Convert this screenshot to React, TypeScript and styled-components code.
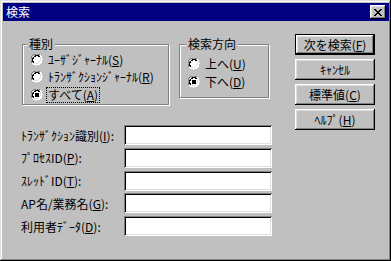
import React from "react";
import styled, { createGlobalStyle } from "styled-components";

const Global = createGlobalStyle`
  html, body { margin: 0; padding: 0; background: #c0c0c0; }
  body { font-family: "Noto Sans CJK JP", "Noto Sans", sans-serif; font-size: 12px; }
  * { box-sizing: border-box; }
`;

const Window = styled.div`
  width: 391px;
  height: 261px;
  background: #c0c0c0;
  padding: 3px 2px 3px 3px;
  box-shadow: inset -1px -1px #000, inset 1px 1px #dfdfdf, inset -2px -2px #808080, inset 2px 2px #fff;
  display: flex;
  flex-direction: column;
  color: #000;
  font-family: "Noto Sans CJK JP", "Noto Sans", sans-serif;
  font-size: 12px;
  line-height: 13px;
`;

const TitleBar = styled.div`
  height: 18px;
  background: #000080;
  display: flex;
  align-items: center;
  justify-content: space-between;
  padding: 0 3px 0 3px;
`;

const TitleText = styled.span`
  color: #fff;
  font-size: 12px;
  line-height: 14px;
`;

const CloseButton = styled.div`
  width: 16px;
  height: 14px;
  background: #c0c0c0;
  box-shadow: inset -1px -1px #000, inset 1px 1px #fff, inset -2px -2px #808080, inset 2px 2px #dfdfdf;
  display: flex;
  align-items: center;
  justify-content: center;
`;

const Body = styled.div`
  flex: 1;
  display: flex;
  padding: 13px 0 0 19px;
`;

const LeftCol = styled.div`
  width: 273px;
  margin-top: 10px;
  display: flex;
  flex-direction: column;
`;

const TopRow = styled.div`
  display: flex;
  align-items: flex-start;
  gap: 10px;
`;

const GroupBox = styled.div<{ $w: number; $h: number; $pt: number }>`
  position: relative;
  width: ${(p) => p.$w}px;
  height: ${(p) => p.$h}px;
  border: 1px solid #808080;
  box-shadow: inset 1px 1px #fff, 1px 1px #fff;
  padding: ${(p) => p.$pt}px 0 0 8px;
  display: flex;
  flex-direction: column;
`;

const Legend = styled.span<{ $left: number }>`
  position: absolute;
  top: -8px;
  left: ${(p) => p.$left}px;
  padding: 0 2px;
  background: #c0c0c0;
  line-height: 14px;
`;

const RadioRow = styled.label<{ $h?: number }>`
  display: flex;
  align-items: center;
  height: ${(p) => p.$h ?? 18}px;
  gap: 5px;
  white-space: nowrap;
`;

const Focus = styled.span<{ $on?: boolean }>`
  padding: 0 1px;
  margin-left: -1px;
  outline: ${(p) => (p.$on ? "1px dotted #000" : "none")};
  line-height: 14px;
`;

const Form = styled.div`
  margin-top: 20px;
  margin-left: -1px;
  display: flex;
  flex-direction: column;
  gap: 2.75px;
`;

const FormRow = styled.div`
  display: flex;
  align-items: center;
  height: 20px;
`;

const FieldLabel = styled.span`
  width: 103px;
  white-space: nowrap;
`;

const TextBox = styled.div`
  width: 148px;
  height: 20px;
  background: #fff;
  box-shadow: inset 1px 1px #808080, inset -1px -1px #fff, inset 2px 2px #000, inset -2px -2px #dfdfdf;
`;

const ButtonCol = styled.div`
  display: flex;
  flex-direction: column;
  gap: 4px;
`;

const Button = styled.div<{ $default?: boolean }>`
  width: 80px;
  height: 21px;
  display: flex;
  align-items: center;
  justify-content: center;
  background: #c0c0c0;
  white-space: nowrap;
  box-shadow: ${(p) =>
    p.$default
      ? "inset 0 0 0 1px #000, inset -2px -2px #000, inset 2px 2px #fff, inset -3px -3px #808080, inset 3px 3px #dfdfdf"
      : "inset -1px -1px #000, inset 1px 1px #fff, inset -2px -2px #808080, inset 2px 2px #dfdfdf"};
`;

const Radio = ({ checked }: { checked?: boolean }) => (
  <svg width="12" height="12" viewBox="0 0 12 12" shapeRendering="crispEdges">
    <circle cx="6" cy="6" r="5" fill="#fff" />
    <path d="M1.5 9.5 A5.5 5.5 0 0 1 9.5 1.5" fill="none" stroke="#808080" strokeWidth="1" />
    <path d="M9.5 1.5 A5.5 5.5 0 0 1 1.5 9.5" fill="none" stroke="#fff" strokeWidth="1" />
    <path d="M2.6 8.6 A4.3 4.3 0 0 1 8.6 2.6" fill="none" stroke="#000" strokeWidth="1" />
    <path d="M8.6 2.6 A4.3 4.3 0 0 1 2.6 8.6" fill="none" stroke="#dfdfdf" strokeWidth="1" />
    {checked && <rect x="4" y="4" width="4" height="4" fill="#000" />}
  </svg>
);

const CloseIcon = () => (
  <svg width="8" height="7" viewBox="0 0 8 7" shapeRendering="crispEdges">
    <path d="M0 0h2v1h-2zM6 0h2v1h-2zM1 1h2v1h-2zM5 1h2v1h-2zM2 2h4v1h-4zM3 3h2v1h-2zM2 4h4v1h-4zM1 5h2v1h-2zM5 5h2v1h-2zM0 6h2v1h-2zM6 6h2v1h-2z" fill="#000" />
  </svg>
);

export default function App() {
  return (
    <>
      <Global />
      <Window>
        <TitleBar>
          <TitleText>検索</TitleText>
          <CloseButton>
            <CloseIcon />
          </CloseButton>
        </TitleBar>
        <Body>
          <LeftCol>
            <TopRow>
              <GroupBox $w={147} $h={61} $pt={6}>
                <Legend $left={4}>種別</Legend>
                <RadioRow>
                  <Radio />
                  <Focus>ﾕｰｻﾞｼﾞｬｰﾅﾙ(<u>S</u>)</Focus>
                </RadioRow>
                <RadioRow>
                  <Radio />
                  <Focus>ﾄﾗﾝｻﾞｸｼｮﾝｼﾞｬｰﾅﾙ(<u>R</u>)</Focus>
                </RadioRow>
                <RadioRow $h={20}>
                  <Radio checked />
                  <Focus $on>すべて(<u>A</u>)</Focus>
                </RadioRow>
              </GroupBox>
              <GroupBox $w={90} $h={54} $pt={10}>
                <Legend $left={6}>検索方向</Legend>
                <RadioRow>
                  <Radio />
                  <Focus>上へ(<u>U</u>)</Focus>
                </RadioRow>
                <RadioRow>
                  <Radio checked />
                  <Focus>下へ(<u>D</u>)</Focus>
                </RadioRow>
              </GroupBox>
            </TopRow>
            <Form>
              <FormRow>
                <FieldLabel>ﾄﾗﾝｻﾞｸｼｮﾝ識別(<u>I</u>):</FieldLabel>
                <TextBox />
              </FormRow>
              <FormRow>
                <FieldLabel>ﾌﾟﾛｾｽID(<u>P</u>):</FieldLabel>
                <TextBox />
              </FormRow>
              <FormRow>
                <FieldLabel>ｽﾚｯﾄﾞID(<u>T</u>):</FieldLabel>
                <TextBox />
              </FormRow>
              <FormRow>
                <FieldLabel>AP名/業務名(<u>G</u>):</FieldLabel>
                <TextBox />
              </FormRow>
              <FormRow>
                <FieldLabel>利用者ﾃﾞｰﾀ(<u>D</u>):</FieldLabel>
                <TextBox />
              </FormRow>
            </Form>
          </LeftCol>
          <ButtonCol>
            <Button $default>次を検索(<u>F</u>)</Button>
            <Button>ｷｬﾝｾﾙ</Button>
            <Button>標準値(<u>C</u>)</Button>
            <Button>ﾍﾙﾌﾟ(<u>H</u>)</Button>
          </ButtonCol>
        </Body>
      </Window>
    </>
  );
}
